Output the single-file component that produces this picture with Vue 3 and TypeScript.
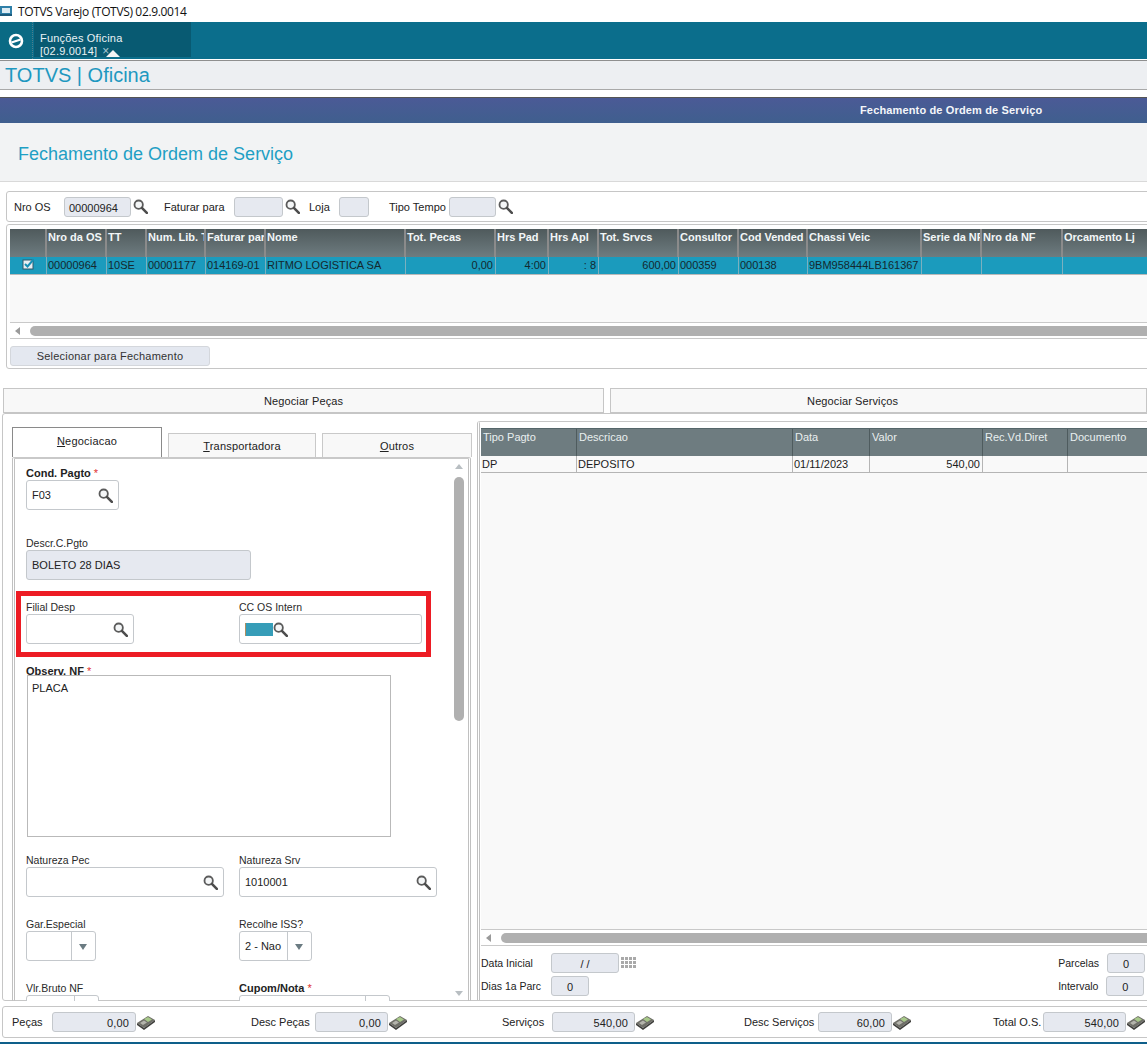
<template>
  <div class="app">
    <div class="titlebar">
      <svg class="win-icon" width="12" height="12" viewBox="0 0 12 12">
        <rect x="0" y="1" width="12" height="10" fill="#2f7fa8" />
        <rect x="2" y="3" width="8" height="5" fill="#dcebf3" />
        <rect x="0" y="9" width="12" height="2" fill="#1b5a7c" />
      </svg>
      <span>TOTVS Varejo (TOTVS) 02.9.0014</span>
    </div>

    <div class="topbar">
      <div class="logo-cell">
        <svg width="18" height="18" viewBox="0 0 18 18">
          <circle cx="9" cy="9" r="6" fill="none" stroke="#fff" stroke-width="2.6" />
          <path d="M4.5 10.5 L13.5 7.5" stroke="#fff" stroke-width="2.2" />
        </svg>
      </div>
      <div class="app-tab">
        <span>Funções Oficina [02.9.0014]</span>
        <span class="tab-x">×</span>
        <i class="tab-arrow"></i>
      </div>
    </div>

    <div class="brandbar">TOTVS | Oficina</div>

    <div class="bluebar">Fechamento de Ordem de Serviço</div>
    <div class="page-head">Fechamento de Ordem de Serviço</div>

    <div class="filter box">
      <label class="f-nro">Nro OS</label>
      <span class="inp ro f-os">00000964</span>
      <svg class="lens" viewBox="0 0 14 14"><use href="#lens" /></svg>
      <label class="f-fat">Faturar para</label>
      <span class="inp ro f-fatv"></span>
      <svg class="lens" viewBox="0 0 14 14"><use href="#lens" /></svg>
      <label class="f-loja">Loja</label>
      <span class="inp ro f-lojav"></span>
      <label class="f-tipo">Tipo Tempo</label>
      <span class="inp ro f-tipov"></span>
      <svg class="lens" viewBox="0 0 14 14"><use href="#lens" /></svg>
    </div>

    <div class="grid-box box">
      <div class="os-grid">
        <div class="os-head">
          <div v-for="c in osCols" :key="c.label" class="os-hcell" :style="{ width: c.w + 'px' }">{{ c.label }}</div>
        </div>
        <div class="os-row">
          <div v-for="c in osCols" :key="c.label" class="os-cell" :class="{ num: c.num }" :style="{ width: c.w + 'px' }">
            <svg v-if="c.check" class="check" width="13" height="12" viewBox="0 0 13 12">
              <rect x="1" y="2" width="10" height="9" fill="#e8eef2" stroke="#30586a" />
              <path d="M3 6 L5.5 8.5 L11.5 1.5" fill="none" stroke="#178fb5" stroke-width="2" />
            </svg>
            {{ c.value }}
          </div>
        </div>
        <div class="os-empty"></div>
      </div>
      <div class="hscroll">
        <i class="arrow-left"></i>
        <div class="thumb"></div>
      </div>
      <button class="btn-sel">Selecionar para Fechamento</button>
    </div>

    <div class="nego-tabs">
      <div class="nego-tab t-pecas">Negociar Peças</div>
      <div class="nego-tab t-serv">Negociar Serviços</div>
    </div>

    <div class="main">
      <div class="left">
        <div class="form-tabs">
          <div class="ftab active" style="width: 150px"><u>N</u>egociacao</div>
          <div class="ftab" style="width: 148px"><u>T</u>ransportadora</div>
          <div class="ftab" style="width: 150px"><u>O</u>utros</div>
        </div>
        <div class="form-wrap">
          <div class="form">
            <label class="lbl req first">Cond. Pagto <em>*</em></label>
            <div class="inp field w93"><span>F03</span><svg class="lens" viewBox="0 0 14 14"><use href="#lens" /></svg></div>

            <label class="lbl l2">Descr.C.Pgto</label>
            <div class="inp ro field w225"><span>BOLETO 28 DIAS</span></div>

            <div class="redbox">
              <div class="two">
                <div>
                  <label class="lbl">Filial Desp</label>
                  <div class="inp field w108"><span></span><svg class="lens" viewBox="0 0 14 14"><use href="#lens" /></svg></div>
                </div>
                <div>
                  <label class="lbl">CC OS Intern</label>
                  <div class="inp field w183"><span class="masked"></span><svg class="lens" viewBox="0 0 14 14"><use href="#lens" /></svg></div>
                </div>
              </div>
            </div>

            <label class="lbl req l3">Observ. NF <em>*</em></label>
            <div class="memo">PLACA</div>

            <div class="two t-nat">
              <div>
                <label class="lbl">Natureza Pec</label>
                <div class="inp field w198"><span></span><svg class="lens" viewBox="0 0 14 14"><use href="#lens" /></svg></div>
              </div>
              <div>
                <label class="lbl">Natureza Srv</label>
                <div class="inp field w198"><span>1010001</span><svg class="lens" viewBox="0 0 14 14"><use href="#lens" /></svg></div>
              </div>
            </div>

            <div class="two t-gar">
              <div>
                <label class="lbl">Gar.Especial</label>
                <div class="inp field combo w70"><span></span><b class="caret"></b></div>
              </div>
              <div>
                <label class="lbl">Recolhe ISS?</label>
                <div class="inp field combo w73"><span>2 - Nao</span><b class="caret"></b></div>
              </div>
            </div>

            <div class="two t-gar">
              <div>
                <label class="lbl">Vlr.Bruto NF</label>
                <div class="inp field combo w73"><span></span><b class="caret"></b></div>
              </div>
              <div>
                <label class="lbl req">Cupom/Nota <em>*</em></label>
                <div class="inp field combo w151"><span></span><b class="caret"></b></div>
              </div>
            </div>
          </div>
          <div class="vscroll">
            <i class="arrow-up"></i>
            <div class="vtrack"><div class="vthumb"></div></div>
            <i class="arrow-down"></i>
          </div>
        </div>
      </div>

      <div class="right">
        <div class="pay-grid">
          <div class="pay-head">
            <div v-for="c in payCols" :key="c.label" class="pay-hcell" :style="{ width: c.w + 'px' }">{{ c.label }}</div>
          </div>
          <div class="pay-row">
            <div v-for="c in payCols" :key="c.label" class="pay-cell" :class="{ num: c.num }" :style="{ width: c.w + 'px' }">{{ c.value }}</div>
          </div>
          <div class="pay-empty"></div>
          <div class="hscroll">
            <i class="arrow-left"></i>
            <div class="thumb"></div>
          </div>
        </div>
        <div class="pay-form">
          <div class="pf-col">
            <div class="pf-line">
              <label class="pf-lbl">Data Inicial</label>
              <span class="inp ro pf-date">/ /</span>
              <svg class="cal" width="17" height="14" viewBox="0 0 17 14">
                <g fill="#a9a9a9">
                  <rect v-for="p in calCells" :key="p.k" :x="p.x" :y="p.y" width="3" height="3" />
                </g>
              </svg>
            </div>
            <div class="pf-line">
              <label class="pf-lbl">Dias 1a Parc</label>
              <span class="inp ro pf-num">0</span>
            </div>
          </div>
          <div class="pf-col end">
            <div class="pf-line">
              <label class="pf-lbl2">Parcelas</label>
              <span class="inp ro pf-num">0</span>
            </div>
            <div class="pf-line">
              <label class="pf-lbl2">Intervalo</label>
              <span class="inp ro pf-num">0</span>
            </div>
          </div>
        </div>
      </div>
    </div>

    <div class="footer">
      <div v-for="t in totals" :key="t.label" class="tot" :style="{ width: t.w + 'px' }">
        <label :style="{ width: t.lw + 'px' }">{{ t.label }}</label>
        <span class="inp ro tot-v" :style="{ width: t.iw + 'px' }">{{ t.value }}</span>
        <svg width="20" height="16" viewBox="0 0 20 16">
          <path d="M1 9 L12 2 L19 6 L8 14 Z" fill="#6f6f68" />
          <path d="M1 9 L8 14 L19 6 L19 8 L8 16 L1 11 Z" fill="#3f3f3c" />
          <path d="M8 5 L12 3 L16 5.5 L12 8 Z" fill="#a8c98a" />
          <path d="M4 9 L8 6.5 L11 8.5 L7 11 Z" fill="#b4b4ac" />
        </svg>
      </div>
    </div>
    <div class="bottom-line"></div>

    <svg width="0" height="0" class="defs">
      <symbol id="lens" viewBox="0 0 14 14">
        <circle cx="5.3" cy="5.3" r="3.9" fill="#f4f6f7" stroke="#5b5b5b" stroke-width="1.7" />
        <path d="M8.3 8.3 L12.9 12.9" stroke="#4d4d4d" stroke-width="2.4" stroke-linecap="round" />
      </symbol>
    </svg>
  </div>
</template>

<script setup lang="ts">
interface OsCol { label: string; w: number; value?: string; num?: boolean; check?: boolean }

const osCols: OsCol[] = [
  { label: '', w: 37, check: true },
  { label: 'Nro da OS', w: 60, value: '00000964' },
  { label: 'TT', w: 40, value: '10SE' },
  { label: 'Num. Lib. T', w: 59, value: '00001177' },
  { label: 'Faturar par', w: 60, value: '014169-01' },
  { label: 'Nome', w: 140, value: 'RITMO LOGISTICA SA' },
  { label: 'Tot. Pecas', w: 90, value: '0,00', num: true },
  { label: 'Hrs Pad', w: 53, value: '4:00', num: true },
  { label: 'Hrs Apl', w: 50, value: ': 8', num: true },
  { label: 'Tot. Srvcs', w: 80, value: '600,00', num: true },
  { label: 'Consultor', w: 60, value: '000359' },
  { label: 'Cod Vended', w: 69, value: '000138' },
  { label: 'Chassi Veic', w: 114, value: '9BM958444LB161367' },
  { label: 'Serie da NF', w: 60 },
  { label: 'Nro da NF', w: 81 },
  { label: 'Orcamento Lj', w: 120 },
]

const payCols = [
  { label: 'Tipo Pagto', w: 96, value: 'DP' },
  { label: 'Descricao', w: 216, value: 'DEPOSITO' },
  { label: 'Data', w: 77, value: '01/11/2023' },
  { label: 'Valor', w: 113, value: '540,00', num: true },
  { label: 'Rec.Vd.Diret', w: 85, value: '' },
  { label: 'Documento', w: 120, value: '' },
]

const totals = [
  { label: 'Peças', w: 239, lw: 40, iw: 84, value: '0,00' },
  { label: 'Desc Peças', w: 251, lw: 64, iw: 73, value: '0,00' },
  { label: 'Serviços', w: 242, lw: 50, iw: 83, value: '540,00' },
  { label: 'Desc Serviços', w: 249, lw: 74, iw: 74, value: '60,00' },
  { label: 'Total O.S.', w: 154, lw: 50, iw: 83, value: '540,00' },
]

const calCells: { k: string; x: number; y: number }[] = []
for (let r = 0; r < 3; r++) {
  for (let c = 0; c < 4; c++) {
    calCells.push({ k: r + '-' + c, x: c * 4 + 1, y: r * 4 + 1 })
  }
}
</script>

<style>
html, body {
  margin: 0;
  background: #fff;
  overflow: hidden;
}
</style>

<style scoped>
.app {
  width: 1147px;
  height: 1044px;
  overflow: hidden;
  font-family: "Liberation Sans", Arial, sans-serif;
  font-size: 11px;
  color: #222;
  background: #fff;
}
.defs { position: absolute; }
.box {
  border: 1px solid #c6c6c6;
  border-radius: 3px;
}
.titlebar {
  height: 22px;
  display: flex;
  align-items: center;
  gap: 6px;
  font-size: 12px;
  color: #111;
  font-family: "Open Sans", sans-serif;
  letter-spacing: -0.35px;
}
.win-icon { flex: none; }
.topbar {
  height: 37px;
  background: #0b6e8c;
  display: flex;
}
.logo-cell {
  width: 32px;
  height: 37px;
  background: #0a6a84;
  border-right: 1px dotted #4d7f8d;
  display: flex;
  align-items: center;
  justify-content: center;
  margin-right: 1px;
  box-sizing: content-box;
}
.app-tab {
  position: relative;
  width: 157px;
  height: 35px;
  background: #085a72;
  color: #e9f2f5;
  padding: 10px 0 0 6px;
  box-sizing: border-box;
  letter-spacing: 0.2px;
}
.tab-x {
  margin-left: 5px;
  color: #a9c8d3;
  font-size: 12px;
}
.tab-arrow {
  position: absolute;
  left: 72px;
  bottom: 0;
  border-left: 7px solid transparent;
  border-right: 7px solid transparent;
  border-bottom: 7px solid #f2f3f4;
}
.brandbar {
  margin-top: 1px;
  height: 30px;
  box-sizing: border-box;
  border-top: 1px solid #8f8f8f;
  border-bottom: 1px solid #a9a9a9;
  background: #edeff2;
  color: #1f98c0;
  font-size: 20px;
  line-height: 28px;
  padding-left: 5px;
}
.bluebar {
  margin-top: 7px;
  height: 26px;
  box-sizing: border-box;
  border-top: 1px solid #555;
  background: linear-gradient(#4b5a96, #3f5f8e);
  color: #f4f6fa;
  font-weight: bold;
  line-height: 25px;
  padding-left: 860px;
  letter-spacing: 0.15px;
}
.page-head {
  height: 59px;
  box-sizing: border-box;
  background: #f2f3f4;
  border-bottom: 1px solid #d9d9d9;
  color: #1f9fc4;
  font-size: 18px;
  line-height: 62px;
  padding-left: 18px;
}
.filter {
  margin: 9px 0 0 6px;
  width: 1160px;
  height: 31px;
  box-sizing: border-box;
  display: flex;
  align-items: center;
  padding-left: 7px;
  background: #fff;
}
.inp {
  display: block;
  box-sizing: border-box;
  border: 1px solid #c4c8cc;
  border-radius: 3px;
  background: #fff;
}
.ro {
  background: #e6e9f0;
}
.lens {
  width: 15px;
  height: 15px;
  flex: none;
}
.f-nro { width: 50px; }
.f-os { width: 67px; height: 20px; line-height: 20px; padding-left: 4px; }
.filter .lens { margin-left: 2px; }
.f-fat { margin-left: 16px; width: 70px; }
.f-fatv { width: 49px; height: 20px; }
.f-loja { margin-left: 9px; width: 30px; }
.f-lojav { width: 30px; height: 20px; }
.f-tipo { margin-left: 20px; width: 60px; }
.f-tipov { width: 47px; height: 20px; }

.grid-box {
  margin: 2px 0 0 6px;
  width: 1160px;
  height: 145px;
  box-sizing: border-box;
  padding-top: 4px;
}
.os-grid {
  margin-left: 3px;
}
.os-head {
  display: flex;
  height: 28px;
  background: linear-gradient(#4f5a5c, #6e7c80);
}
.os-hcell {
  flex: none;
  box-sizing: border-box;
  border-right: 2px solid #8b8b8b;
  color: #f2f6f7;
  font-weight: bold;
  padding: 2px 0 0 1px;
  white-space: nowrap;
  overflow: hidden;
}
.os-row {
  display: flex;
  height: 17px;
  background: #1b9bbd;
  border-bottom: 1px solid #b9b9b9;
}
.os-cell {
  flex: none;
  box-sizing: border-box;
  border-right: 1px solid #7bb0bf;
  color: #14282e;
  line-height: 16px;
  padding: 0 2px 0 1px;
  white-space: nowrap;
  overflow: hidden;
}
.os-cell.num { text-align: right; }
.check {
  display: block;
  margin: 1px 0 0 11px;
}
.os-empty {
  height: 47px;
  background: #f9f9f9;
  border-bottom: 1px solid #c9c9c9;
}
.hscroll {
  display: flex;
  align-items: center;
  height: 15px;
  border-bottom: 1px solid #c9c9c9;
  padding-left: 5px;
  background: #fff;
}
.grid-box .hscroll { margin-left: 3px; }
.arrow-left {
  flex: none;
  border-top: 4px solid transparent;
  border-bottom: 4px solid transparent;
  border-right: 5px solid #9a9a9a;
  margin-right: 10px;
}
.thumb {
  flex: 1;
  height: 10px;
  background: #b0b0b0;
  border-radius: 5px 0 0 5px;
}
.btn-sel {
  display: block;
  margin: 7px 0 0 3px;
  width: 200px;
  height: 20px;
  border: 1px solid #d4d7dc;
  border-radius: 3px;
  background: #e4e8f0;
  color: #333;
  font: 11px "Liberation Sans", Arial, sans-serif;
  letter-spacing: 0.2px;
}

.nego-tabs {
  display: flex;
  margin: 19px 0 0 3px;
  gap: 6px;
  height: 25px;
}
.nego-tab {
  box-sizing: border-box;
  height: 25px;
  border: 1px solid #c6c6c6;
  border-bottom-color: #c6c6c6;
  background: #f8f8f8;
  text-align: center;
  line-height: 24px;
  color: #222;
  letter-spacing: 0.1px;
}
.t-pecas { width: 630px; }
.t-serv { width: 560px; padding-right: 52px; }

.main {
  display: flex;
  margin: 0 0 0 2px;
  height: 588px;
  box-sizing: border-box;
  border: 1px solid #c6c6c6;
  border-radius: 3px 0 0 3px;
  width: 1180px;
}
.left {
  width: 473px;
  flex: none;
  padding: 13px 0 0 9px;
  box-sizing: border-box;
}
.form-tabs {
  display: flex;
  align-items: flex-end;
  gap: 6px;
  height: 30px;
}
.ftab {
  height: 24px;
  box-sizing: border-box;
  border: 1px solid #c9c9c9;
  border-bottom: none;
  background: #f8f8f8;
  text-align: center;
  line-height: 25px;
  letter-spacing: 0.2px;
}
.ftab.active {
  height: 30px;
  background: #fff;
  border-color: #8a8a8a;
  line-height: 27px;
}
.form-wrap {
  position: relative;
  display: flex;
  width: 459px;
  height: 544px;
  box-sizing: border-box;
  border: 1px solid #c6c6c6;
  border-bottom: none;
  border-left: 3px double #c0c0c0;
  border-right: 3px double #c0c0c0;
  border-top: 2px solid #c9c9c9;
  border-radius: 2px 2px 0 0;
  overflow: hidden;
}
.form {
  flex: 1;
  padding: 8px 0 0 11px;
  overflow: hidden;
}
.lbl {
  display: block;
  font-size: 10.5px;
  line-height: 12px;
  height: 13px;
  color: #2a2a2a;
  white-space: nowrap;
}
.lbl.req {
  font-weight: bold;
  font-size: 11px;
  color: #222;
}
.lbl em {
  color: #e03030;
  font-style: normal;
  font-weight: normal;
}
.field {
  display: flex;
  align-items: center;
  height: 30px;
  padding: 0 5px 0 5px;
  background: #fff;
  font-size: 11px;
}
.field.ro { background: #e6e9f0; }
.field > span { flex: 1; white-space: nowrap; }
.masked {
  flex: none !important;
  width: 27px;
  height: 13px;
  background: #369db8;
  border-left: 1px solid #b08f60;
}
.w70 { width: 70px; }
.w73 { width: 73px; }
.w93 { width: 93px; }
.w108 { width: 108px; }
.w151 { width: 151px; }
.w183 { width: 183px; }
.w198 { width: 198px; }
.w225 { width: 225px; }
.combo { padding-right: 0; }
.caret {
  position: relative;
  flex: none;
  width: 23px;
  height: 100%;
  border-left: 1px solid #c4c8cc;
}
.caret::after {
  content: "";
  position: absolute;
  left: 7px;
  top: 12px;
  border-left: 4px solid transparent;
  border-right: 4px solid transparent;
  border-top: 6px solid #6b7b82;
}
.l2 { margin-top: 27px; }
.redbox {
  margin: 11px 0 0 -10px;
  width: 415px;
  height: 66px;
  box-sizing: border-box;
  border: 5px solid #ed1c24;
  padding: 5px 0 0 5px;
}
.two {
  display: grid;
  grid-template-columns: 213px 1fr;
}
.l3 { margin-top: 8px; }
.memo {
  width: 364px;
  height: 162px;
  margin: -3px 0 0 1px;
  box-sizing: border-box;
  border: 1px solid #b9b9b9;
  padding: 6px 4px;
  background: #fff;
}
.t-nat { margin-top: 17px; }
.t-gar { margin-top: 21px; }

.vscroll {
  flex: none;
  width: 15px;
  margin-right: 2px;
  display: flex;
  flex-direction: column;
  align-items: center;
  padding-top: 5px;
  box-sizing: border-box;
}
.arrow-up {
  border-left: 4px solid transparent;
  border-right: 4px solid transparent;
  border-bottom: 5px solid #b8bec2;
}
.arrow-down {
  border-left: 4px solid transparent;
  border-right: 4px solid transparent;
  border-top: 5px solid #b8bec2;
  margin-bottom: 5px;
}
.vtrack {
  flex: 1;
  width: 10px;
  padding-top: 8px;
  margin-bottom: 8px;
}
.vthumb {
  height: 244px;
  background: #b0b0b0;
  border-radius: 5px;
}

.right {
  flex: none;
  width: 671px;
  margin: 7px 0 0 1px;
  box-sizing: border-box;
  border: 1px solid #c6c6c6;
  border-left: 3px double #c0c0c0;
  border-bottom: none;
  border-radius: 3px 0 0 0;
  padding: 6px 0 0 1px;
}
.pay-head {
  display: flex;
  height: 28px;
  background: #6e7c80;
  border-top: 1px solid #55666a;
  box-sizing: border-box;
}
.pay-hcell {
  flex: none;
  box-sizing: border-box;
  border-right: 1px solid #4e5b5e;
  color: #e9efef;
  padding: 2px 0 0 2px;
  white-space: nowrap;
}
.pay-row {
  display: flex;
  height: 17px;
  background: #f9f9f9;
  border-bottom: 1px solid #b5b5b5;
  box-sizing: border-box;
}
.pay-cell {
  flex: none;
  box-sizing: border-box;
  border-right: 1px solid #b5b5b5;
  line-height: 16px;
  padding: 0 2px 0 1px;
  color: #1c1c1c;
}
.pay-cell.num { text-align: right; }
.pay-empty {
  height: 456px;
  background: #f9f9f9;
  border-bottom: 1px solid #c9c9c9;
}
.pay-form {
  display: flex;
  justify-content: space-between;
  width: 664px;
  margin-top: 6px;
}
.pf-col { display: flex; flex-direction: column; gap: 2px; }
.pf-line {
  display: flex;
  align-items: center;
  height: 21px;
}
.pf-lbl { width: 70px; font-size: 10.5px; }
.pf-lbl2 { margin-right: 8px; font-size: 10.5px; }
.pf-date {
  width: 68px;
  height: 20px;
  line-height: 20px;
  text-align: center;
}
.pf-num {
  width: 38px;
  height: 20px;
  line-height: 21px;
  text-align: center;
}
.cal { margin-left: 1px; }

.footer {
  display: flex;
  margin: 5px 0 0 2px;
  width: 1180px;
  height: 32px;
  box-sizing: border-box;
  border: 1px solid #c6c6c6;
  border-radius: 3px;
  padding-left: 9px;
  align-items: center;
}
.tot {
  flex: none;
  display: flex;
  align-items: center;
}
.tot label { flex: none; }
.tot-v {
  flex: none;
  height: 20px;
  line-height: 20px;
  text-align: right;
  padding-right: 6px;
  letter-spacing: 0.15px;
}
.bottom-line {
  margin-top: 4px;
  height: 2px;
  background: #0e5f8a;
}
</style>
